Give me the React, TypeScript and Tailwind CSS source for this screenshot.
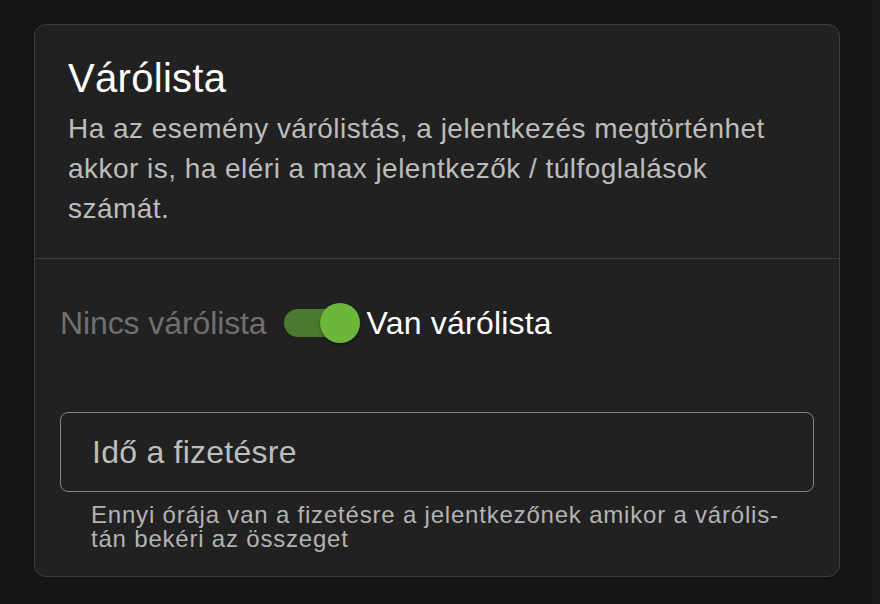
import React from "react";

export default function App() {
  return (
    <div
      className="flex w-[880px] h-[604px] bg-[#141414] overflow-hidden"
      style={{ fontFamily: '"Liberation Sans", Arial, sans-serif' }}
    >
      <div className="flex-1 pl-[34px] pt-[24px]">
        <div className="w-[806px] rounded-[12px] border border-[#3c3c3c] bg-[#212121]">
          <div className="pt-[29px] pb-[29px] px-[33px] border-b border-[#3d3d3d]">
            <h2 className="text-[40px] leading-[48px] tracking-[0.3px] text-white">Várólista</h2>
            <p className="mt-[7px] text-[28px] leading-[40px] tracking-[0.47px] text-[#bcbcbc]">
              Ha az esemény várólistás, a jelentkezés megtörténhet
              <br />
              akkor is, ha eléri a max jelentkezők / túlfoglalások
              <br />
              számát.
            </p>
          </div>
          <div className="pt-[26px] px-[25px] pb-[25px]">
            <div className="flex items-center h-[76px]">
              <span className="text-[32px] text-[#6f6f6f] tracking-[-0.1px]">Nincs várólista</span>
              <div className="relative ml-[17px] w-[76px] h-[40px] flex items-center">
                <div className="w-[68px] h-[28px] rounded-full bg-[#4b7a2f]" />
                <div className="absolute left-[36px] top-0 w-[40px] h-[40px] rounded-full bg-[#6cb63a] shadow-[0_2px_3px_rgba(0,0,0,0.35)]" />
              </div>
              <span className="ml-[7px] text-[32px] text-white tracking-[0.2px]">Van várólista</span>
            </div>
            <div className="mt-[51px] h-[80px] rounded-[8px] border border-[#858585] flex items-center px-[31px]">
              <span className="text-[32px] text-[#bdbdbd] tracking-[0.25px]">Idő a fizetésre</span>
            </div>
            <p className="mt-[11px] px-[31px] text-[24px] leading-[24px] tracking-[0.8px] text-[#b3b3b3]">
              Ennyi órája van a fizetésre a jelentkezőnek amikor a várólis-
              <br />
              tán bekéri az összeget
            </p>
          </div>
        </div>
      </div>
      <div className="w-[8px] h-full bg-[#1b1b1b]" />
    </div>
  );
}
